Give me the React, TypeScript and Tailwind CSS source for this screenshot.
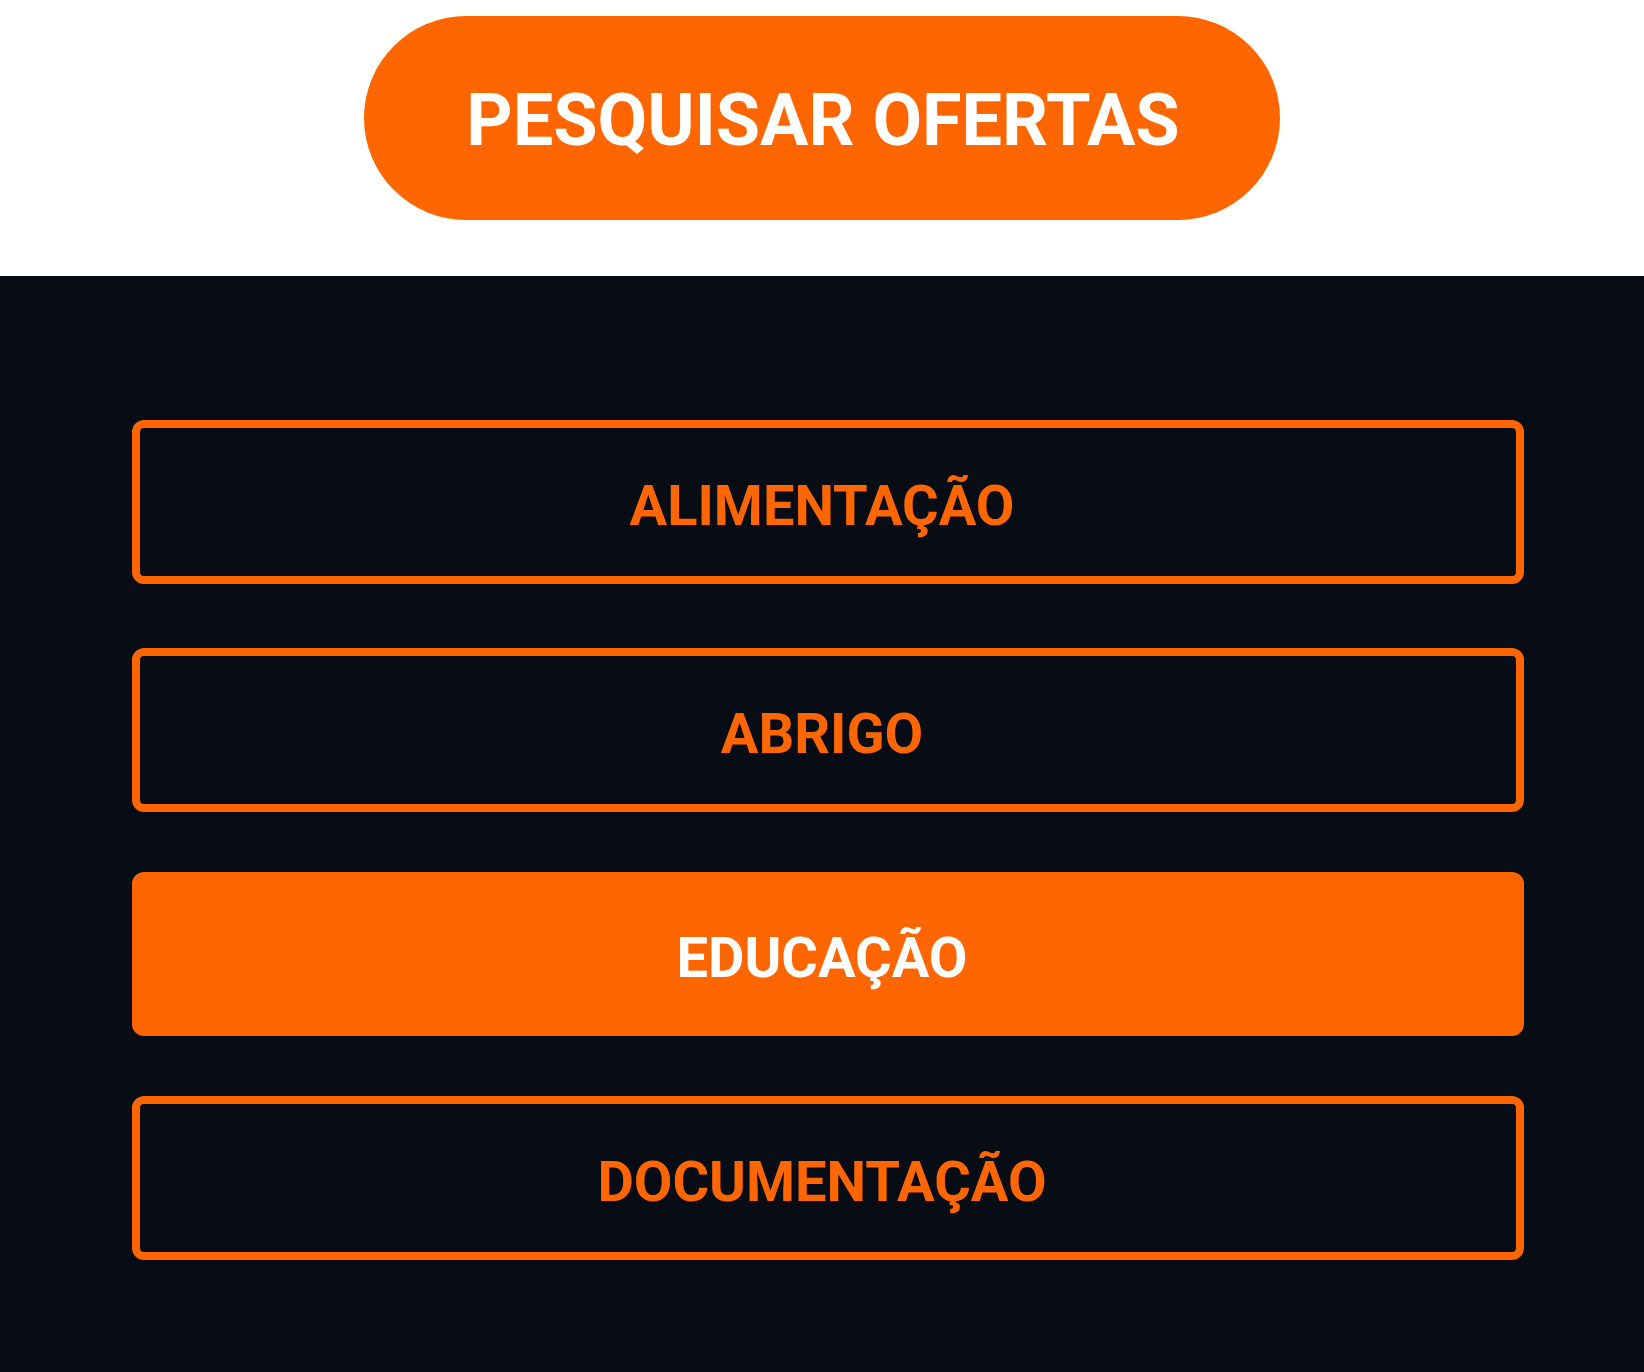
const categories = [
  { label: 'ALIMENTAÇÃO', active: false },
  { label: 'ABRIGO', active: false },
  { label: 'EDUCAÇÃO', active: true },
  { label: 'DOCUMENTAÇÃO', active: false },
]

export default function App() {
  return (
    <div className="min-h-[1372px] w-full flex flex-col" style={{ fontFamily: 'Roboto, "Noto Sans", sans-serif' }}>
      {/* Search button */}
      <div className="bg-white h-[276px] pt-4 flex justify-center">
        <button className="w-[916px] h-[204px] rounded-full bg-[#ff6600] text-white text-[72px] font-bold leading-none pl-[2px] pt-[6px]">
          PESQUISAR OFERTAS
        </button>
      </div>

      {/* Category list */}
      <div className="flex-1 bg-[#080c15] pt-[144px] pb-[112px] pl-[132px] pr-[120px] flex flex-col gap-[60px]">
        {categories.map((c, i) => (
          <button
            key={c.label}
            className={
              'h-[164px] w-full rounded-[12px] text-[56px] font-bold leading-none pr-3 pt-[7px] ' +
              (c.active
                ? 'bg-[#ff6600] text-white'
                : 'border-[8px] border-[#ff6600] text-[#ff6600] bg-transparent') +
              (i === 0 ? ' mb-1' : '')
            }
          >
            {c.label}
          </button>
        ))}
      </div>
    </div>
  )
}
